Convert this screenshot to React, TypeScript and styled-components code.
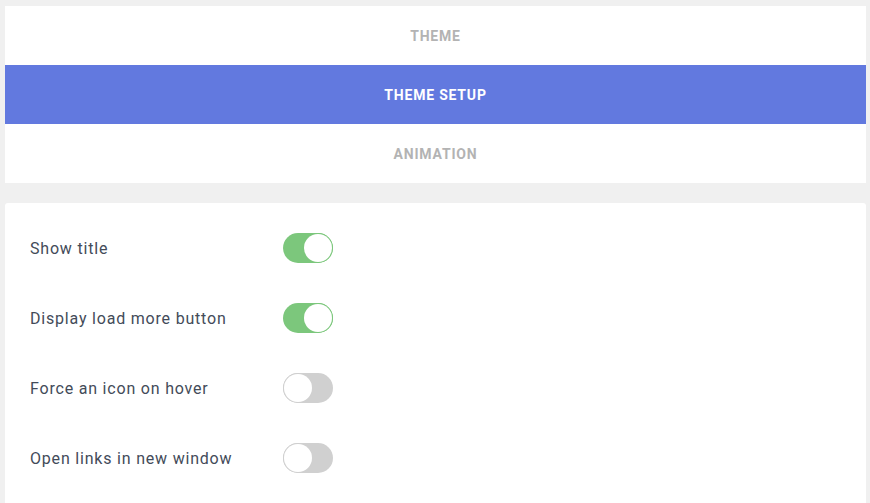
import React, { useState } from "react";
import styled, { createGlobalStyle } from "styled-components";

const Global = createGlobalStyle`
  html, body { margin: 0; padding: 0; background: #f0f0f0; }
  body { font-family: Roboto, "Liberation Sans", sans-serif; }
`;

const Page = styled.div`
  padding: 6px 4px 0 5px;
  display: flex;
  flex-direction: column;
  gap: 20px;
`;

const TabCard = styled.div`
  background: #fff;
  display: flex;
  flex-direction: column;
`;

const Tab = styled.button<{ $active?: boolean }>`
  height: 59px;
  border: none;
  margin: 0;
  padding: 0;
  cursor: pointer;
  display: flex;
  align-items: center;
  justify-content: center;
  font-family: Roboto, "Liberation Sans", sans-serif;
  font-weight: 700;
  font-size: 14px;
  letter-spacing: 0.8px;
  text-transform: uppercase;
  background: ${(p) => (p.$active ? "#6279df" : "#fff")};
  color: ${(p) => (p.$active ? "#fff" : "#b3b3b3")};
`;

const SettingsCard = styled.div`
  background: #fff;
  border-radius: 3px 3px 0 0;
  padding: 30px 0 40px 25px;
  display: flex;
  flex-direction: column;
  gap: 40px;
`;

const Row = styled.label`
  display: flex;
  align-items: center;
  height: 30px;
`;

const Label = styled.span`
  width: 253px;
  font-size: 16px;
  letter-spacing: 0.8px;
  color: #434b59;
`;

const Track = styled.span<{ $on: boolean }>`
  position: relative;
  width: 50px;
  height: 30px;
  border-radius: 15px;
  box-sizing: border-box;
  background: ${(p) => (p.$on ? "#7cc77c" : "#d0d0d0")};
  cursor: pointer;
`;

const Knob = styled.span<{ $on: boolean }>`
  position: absolute;
  top: 1px;
  left: ${(p) => (p.$on ? "21px" : "1px")};
  width: 28px;
  height: 28px;
  border-radius: 50%;
  background: #fff;
  box-shadow: 0 0 0 1px ${(p) => (p.$on ? "#7cc77c" : "#d0d0d0")};
  transition: left 0.2s;
`;

const tabs = ["Theme", "Theme Setup", "Animation"];

const initial = [
  { label: "Show title", on: true },
  { label: "Display load more button", on: true },
  { label: "Force an icon on hover", on: false },
  { label: "Open links in new window", on: false },
];

export default function App() {
  const [active, setActive] = useState(1);
  const [items, setItems] = useState(initial);
  return (
    <>
      <Global />
      <Page>
        <TabCard>
          {tabs.map((t, i) => (
            <Tab key={t} $active={i === active} onClick={() => setActive(i)}>
              {t}
            </Tab>
          ))}
        </TabCard>
        <SettingsCard>
          {items.map((it, i) => (
            <Row key={it.label}>
              <Label>{it.label}</Label>
              <Track
                $on={it.on}
                onClick={() =>
                  setItems(items.map((x, j) => (j === i ? { ...x, on: !x.on } : x)))
                }
              >
                <Knob $on={it.on} />
              </Track>
            </Row>
          ))}
        </SettingsCard>
      </Page>
    </>
  );
}
